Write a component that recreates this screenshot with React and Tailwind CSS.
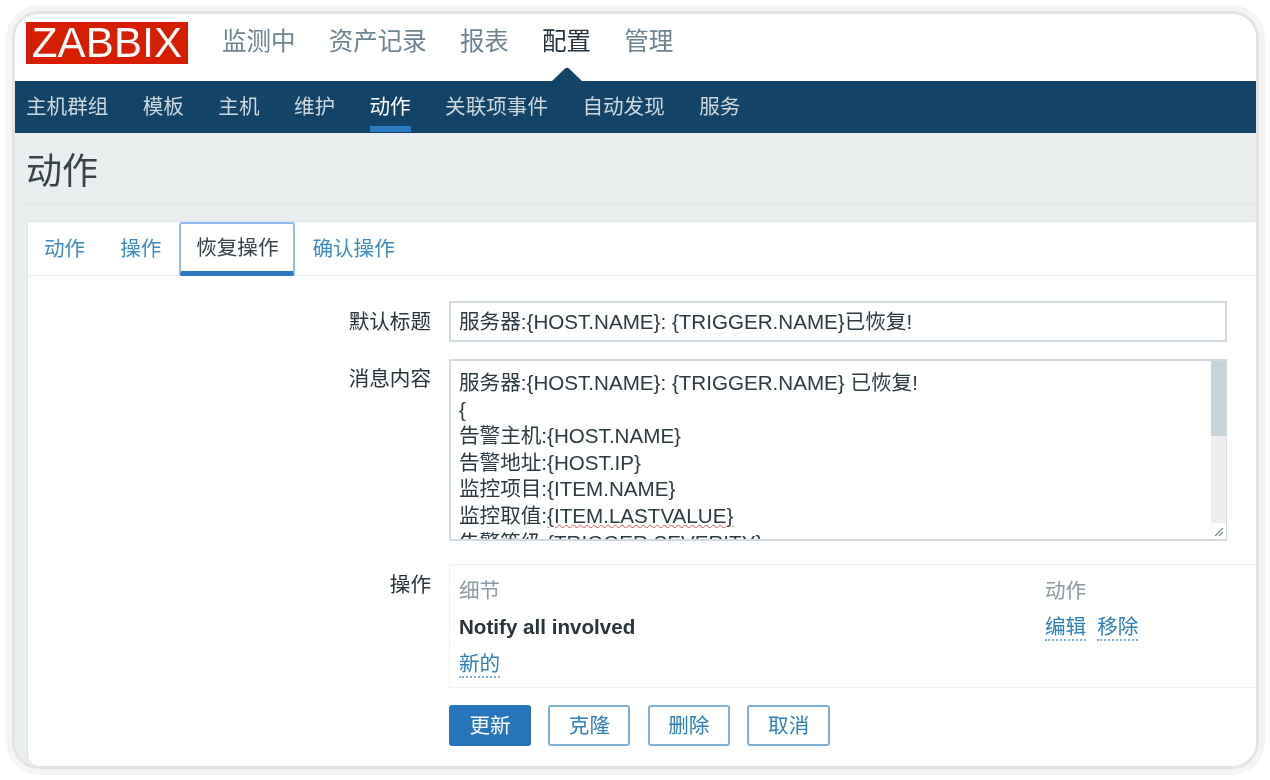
import React from 'react';

const FONT = "font-['Liberation_Sans','Noto_Sans_CJK_SC',sans-serif]";

const topMenu = [
  { name: '监测中' },
  { name: '资产记录' },
  { name: '报表' },
  { name: '配置', active: true },
  { name: '管理' },
];

const subMenu = ['主机群组', '模板', '主机', '维护', '动作', '关联项事件', '自动发现', '服务'];

const messageLines = ['{', '告警主机:{HOST.NAME}', '告警地址:{HOST.IP}', '监控项目:{ITEM.NAME}'];

const DottedLink = ({ children }) => (
  <a className="inline-block h-[28px] border-b-2 border-dotted border-[#7fb0d6] leading-[28px] text-[#2f80b8]">{children}</a>
);

const Header = () => (
  <div className="flex h-[67px] shrink-0 items-start bg-white pl-[11px]">
    <div className="mt-2 flex h-[42px] w-[162px] items-center justify-center bg-[#d81e00] text-[42px] leading-none tracking-[0.2px] text-white">
      ZABBIX
    </div>
    <nav className="ml-[34px] flex h-[55px] items-center gap-[33.2px] pt-[2px] text-[24.5px]">
      {topMenu.map((item) => (
        <div key={item.name} className="relative flex h-full items-center">
          <span className={item.active ? 'text-[#27343b]' : 'text-[#6d838f]'}>{item.name}</span>
          {item.active && (
            <svg className="absolute bottom-[-12px] left-[10px]" width="30" height="14" viewBox="0 0 30 14">
              <path d="M0 14 L13 1.5 Q15 0 17 1.5 L30 14 Z" fill="#134467" />
            </svg>
          )}
        </div>
      ))}
    </nav>
  </div>
);

const SubNav = () => (
  <nav className="flex h-[52px] shrink-0 gap-[34.4px] bg-[#134467] pl-[11px] text-[20.6px]">
    {subMenu.map((name) => (
      <div
        key={name}
        className={`flex h-[51px] items-center border-b-[6px] pt-[8px] ${
          name === '动作' ? 'border-[#2b7cc4] text-white' : 'border-transparent text-[#cdd7dd]'
        }`}
      >
        {name}
      </div>
    ))}
  </nav>
);

const Tabs = () => (
  <div className="flex h-[54px] shrink-0 items-stretch border-b border-[#e9edef] pl-4 text-[20.6px] text-[#3f8cc0]">
    <div className="flex items-center pt-[2px]">动作</div>
    <div className="ml-[35px] flex items-center pt-[2px]">操作</div>
    <div className="ml-[18px] flex h-[54px] w-[116px] items-center justify-center rounded-[3px] border-2 border-b-[5px] border-[#8fbcf0] border-b-[#2b78c0] pt-[2px] text-[#37444b]">
      恢复操作
    </div>
    <div className="ml-[17px] flex items-center pt-[2px]">确认操作</div>
  </div>
);

const Scrollbar = () => (
  <div className="flex w-[15px] shrink-0 flex-col bg-[#eeeeee]">
    <div className="h-[75px] bg-[#c8d3d9]" />
    <div className="flex-1" />
    <div className="flex h-[16px] items-end justify-end bg-white pb-[2px] pr-[2px]">
      <svg width="10" height="10" viewBox="0 0 10 10" stroke="#7d8a91" strokeWidth="1.2">
        <path d="M1 9 L9 1 M5 9 L9 5" />
      </svg>
    </div>
  </div>
);

const Form = () => (
  <div className="flex flex-1 flex-col pt-[25px] text-[20.6px] text-[#27343b]">
    <div className="flex">
      <label className="w-[403px] pt-[7px] text-right leading-[27px]">默认标题</label>
      <div className="ml-[18px] mr-[29px] flex h-[41px] flex-1 items-center border-2 border-[#d0dae0] pl-2 pt-[2px] text-[#2c3a42]">
        服务器:{'{HOST.NAME}'}: {'{TRIGGER.NAME}'}已恢复!
      </div>
    </div>

    <div className="mt-[17px] flex">
      <label className="w-[403px] pt-[6px] text-right leading-[27px]">消息内容</label>
      <div className="ml-[18px] mr-[29px] flex h-[182px] flex-1 border-2 border-r border-[#d0dae0] text-[#2c3a42]">
        <div className="flex-1 overflow-hidden pl-2 pt-[9px] leading-[26.5px]">
          <div>服务器:{'{HOST.NAME}'}: {'{TRIGGER.NAME}'} 已恢复!</div>
          {messageLines.map((line) => (
            <div key={line}>{line}</div>
          ))}
          <div>
            监控取值:
            <span className="underline decoration-wavy decoration-[#e2504f] decoration-1">{'{ITEM.LASTVALUE}'}</span>
          </div>
          <div className="mt-[1px]">告警等级:{'{TRIGGER.SEVERITY}'}</div>
        </div>
        <Scrollbar />
      </div>
    </div>

    <div className="mt-[23px] flex">
      <label className="w-[403px] pt-[7px] text-right leading-[27px]">操作</label>
      <div className="ml-[18px] h-[124px] flex-1 border border-r-0 border-[#eef1f3] pl-[9px] pt-[12px]">
        <div className="flex h-[27px] items-center pt-[1px] text-[#8b9aa3]">
          <span className="w-[586px]">细节</span>
          <span>动作</span>
        </div>
        <div className="mt-[8px] flex h-[29px] items-center">
          <span className="w-[586px] pt-[1px] font-bold">Notify all involved</span>
          <div className="flex gap-[11px]">
            <DottedLink>编辑</DottedLink>
            <DottedLink>移除</DottedLink>
          </div>
        </div>
        <div className="mt-2">
          <DottedLink>新的</DottedLink>
        </div>
      </div>
    </div>

    <div className="ml-[421px] mt-[17px] flex gap-[17.4px]">
      <button className="h-[41px] w-[82px] rounded-[3px] bg-[#2774b9] pt-[1px] text-white">更新</button>
      <button className="h-[41px] w-[82px] rounded-[3px] border-2 border-[#7fb0d6] pt-[1px] text-[#2f80b8]">克隆</button>
      <button className="h-[41px] w-[82px] rounded-[3px] border-2 border-[#7fb0d6] pt-[1px] text-[#2f80b8]">删除</button>
      <button className="h-[41px] w-[83px] rounded-[3px] border-2 border-[#7fb0d6] pt-[1px] text-[#2f80b8]">取消</button>
    </div>
  </div>
);

const App = () => (
  <div className={`h-[780px] w-[1270px] overflow-hidden bg-white pl-[15px] pr-[14px] pt-[14px] ${FONT}`}>
    <div className="h-[752px] rounded-[24px] shadow-[0_0_0_3px_#e4e4e4,0_0_0_9px_#f5f5f5]">
      <div className="flex h-full flex-col overflow-hidden rounded-[24px] bg-[#ebeeef] blur-[0.6px]">
        <Header />
        <SubNav />
        <div className="ml-[11px] flex h-[71px] shrink-0 items-center border-b border-[#dfe3e5] pt-[7px] text-[36px] text-[#37444b]">
          动作
        </div>
        <div className="ml-3 mt-[17px] flex flex-1 flex-col rounded-bl-[12px] border-l border-t border-[#dfe4e7] bg-white">
          <Tabs />
          <Form />
        </div>
      </div>
    </div>
  </div>
);

export default App;
